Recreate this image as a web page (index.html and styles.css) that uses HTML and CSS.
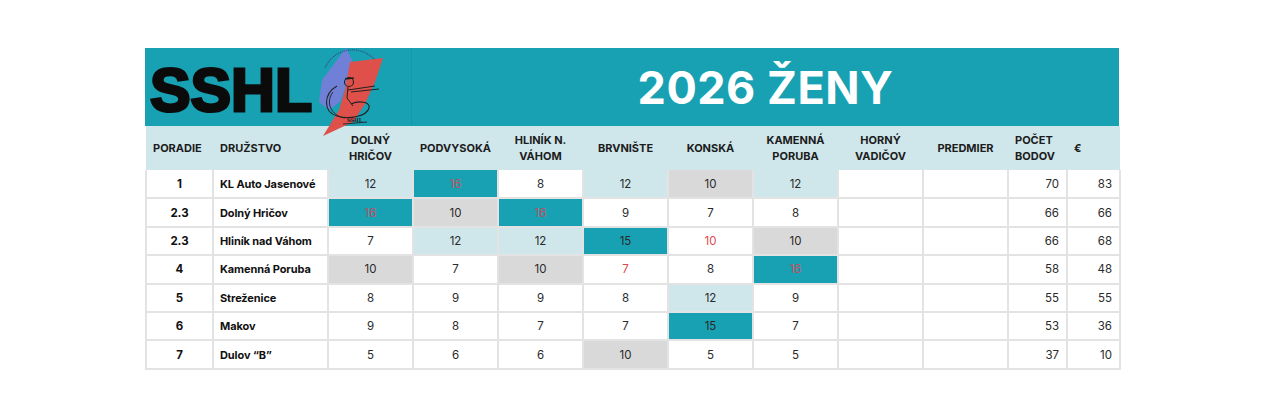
FILE: index.html
```html
<!DOCTYPE html>
<html lang="sk">
<head>
<meta charset="utf-8">
<title>SSHL 2026 Ženy</title>
<link rel="stylesheet" href="styles.css">
</head>
<body>
<div class="board">
  <div class="banner">
    <div class="brand">
      <span class="brand-text">SSHL</span>
      <svg class="emblem" viewBox="0 0 75 92" width="75" height="92" aria-hidden="true">
        <polygon points="31,2 37,14 32,38 25,56 14,64 4,56 7,34" fill="#7080d6"/>
        <polygon points="35,16 68,12 60,36 50,58 38,76 8,90 24,64 30,44" fill="#e0504b"/>
        <path d="M10,22 A30,30 0 0 1 60,14" fill="none" stroke="#3b3f8a" stroke-width="1.1" stroke-dasharray="1 1"/>
        <circle cx="34" cy="36" r="4.5" fill="none" stroke="#222" stroke-width="1.1"/>
        <path d="M30,33 L39,32" stroke="#222" stroke-width="1.3"/>
        <path d="M33,41 L32,52 L38,60 M33,44 L60,40 M36,46 L64,43" fill="none" stroke="#222" stroke-width="1"/>
        <path d="M22,40 C8,48 8,66 22,70 C34,74 52,70 54,62 C56,56 44,54 36,58" fill="none" stroke="#222" stroke-width="1.1"/>
        <path d="M18,46 C10,56 16,70 30,72" fill="none" stroke="#222" stroke-width="0.9"/>
        <path d="M28,78 L52,76" stroke="#222" stroke-width="0.9"/>
        <text x="32" y="76" class="emblem-text">SSHL</text>
      </svg>
    </div>
    <div class="title">2026 ŽENY</div>
  </div>
  <table class="standings">
    <colgroup>
      <col class="c-rank"><col class="c-team">
      <col class="c-club"><col class="c-club"><col class="c-club"><col class="c-club">
      <col class="c-club"><col class="c-club"><col class="c-club"><col class="c-club">
      <col class="c-pts"><col class="c-eur">
    </colgroup>
    <thead>
      <tr>
        <th class="left">PORADIE</th>
        <th class="left">DRUŽSTVO</th>
        <th>DOLNÝ<br>HRIČOV</th>
        <th>PODVYSOKÁ</th>
        <th>HLINÍK N.<br>VÁHOM</th>
        <th>BRVNIŠTE</th>
        <th>KONSKÁ</th>
        <th>KAMENNÁ<br>PORUBA</th>
        <th>HORNÝ<br>VADIČOV</th>
        <th>PREDMIER</th>
        <th class="left">POČET<br>BODOV</th>
        <th class="left">€</th>
      </tr>
    </thead>
    <tbody>
      <tr>
        <td class="rank">1</td><td class="team">KL Auto Jasenové</td>
        <td class="lb">12</td><td class="tl red">16</td><td>8</td><td class="lb">12</td><td class="gr">10</td><td class="lb">12</td><td></td><td></td>
        <td class="num">70</td><td class="num">83</td>
      </tr>
      <tr>
        <td class="rank">2.3</td><td class="team">Dolný Hričov</td>
        <td class="tl red">16</td><td class="gr">10</td><td class="tl red">16</td><td>9</td><td>7</td><td>8</td><td></td><td></td>
        <td class="num">66</td><td class="num">66</td>
      </tr>
      <tr>
        <td class="rank">2.3</td><td class="team">Hliník nad Váhom</td>
        <td>7</td><td class="lb">12</td><td class="lb">12</td><td class="tl">15</td><td class="red">10</td><td class="gr">10</td><td></td><td></td>
        <td class="num">66</td><td class="num">68</td>
      </tr>
      <tr>
        <td class="rank">4</td><td class="team">Kamenná Poruba</td>
        <td class="gr">10</td><td>7</td><td class="gr">10</td><td class="red">7</td><td>8</td><td class="tl red">16</td><td></td><td></td>
        <td class="num">58</td><td class="num">48</td>
      </tr>
      <tr>
        <td class="rank">5</td><td class="team">Streženice</td>
        <td>8</td><td>9</td><td>9</td><td>8</td><td class="lb">12</td><td>9</td><td></td><td></td>
        <td class="num">55</td><td class="num">55</td>
      </tr>
      <tr>
        <td class="rank">6</td><td class="team">Makov</td>
        <td>9</td><td>8</td><td>7</td><td>7</td><td class="tl">15</td><td>7</td><td></td><td></td>
        <td class="num">53</td><td class="num">36</td>
      </tr>
      <tr>
        <td class="rank">7</td><td class="team">Dulov “B”</td>
        <td>5</td><td>6</td><td>6</td><td class="gr">10</td><td>5</td><td>5</td><td></td><td></td>
        <td class="num">37</td><td class="num">10</td>
      </tr>
    </tbody>
  </table>
</div>
</body>
</html>
```

FILE: styles.css
```css
html, body {
  margin: 0;
  padding: 0;
  background: #ffffff;
}

body {
  font-family: Inter, "Open Sans", "Liberation Sans", sans-serif;
  color: #1f1f1f;
}

.board {
  width: 974px;
  margin: 48px 0 0 145px;
  position: relative;
}

.banner {
  display: grid;
  grid-template-columns: 267px 707px;
  height: 78px;
  background: #17a1b3;
}

.brand {
  position: relative;
  border-right: 1px solid #1598aa;
  display: flex;
  align-items: center;
}

.brand-text {
  font-family: "Liberation Sans", Arial, sans-serif;
  font-weight: 700;
  font-size: 62px;
  line-height: 1;
  color: #0b0b0b;
  letter-spacing: 0;
  margin-left: 5px;
  margin-top: 6px;
  -webkit-text-stroke: 3px #0b0b0b;
  transform: scaleX(0.98);
  transform-origin: left center;
}

.emblem {
  position: absolute;
  left: 170px;
  top: -2px;
  z-index: 2;
}

.emblem-text {
  font-family: "DejaVu Serif", serif;
  font-size: 5px;
  font-weight: 700;
  fill: #222;
}

.title {
  display: flex;
  align-items: center;
  justify-content: center;
  color: #ffffff;
  font-weight: 700;
  font-size: 45px;
  letter-spacing: 0.5px;
}

.standings {
  width: 974px;
  border-collapse: collapse;
  table-layout: fixed;
  font-size: 11.5px;
}

.c-rank { width: 67px; }
.c-team { width: 115px; }
.c-club { width: 85px; }
.c-pts { width: 59px; }
.c-eur { width: 53px; }

thead tr {
  background: #cfe7eb;
  height: 44px;
}

th {
  font-size: 11px;
  font-weight: 700;
  color: #1c1c1c;
  text-align: center;
  line-height: 16px;
  padding: 0 4px;
}

th.left {
  text-align: left;
  padding-left: 7px;
}

tbody tr {
  height: 28.4px;
}

td {
  border: 2px solid #e3e3e3;
  text-align: center;
  padding: 0 6px;
  color: #2a2a2a;
  background: #ffffff;
  white-space: nowrap;
}

tbody tr:first-child td {
  border-top: 0;
}

td.rank {
  font-weight: 700;
  color: #111;
}

td.team {
  text-align: left;
  font-weight: 700;
  font-size: 11px;
  letter-spacing: -0.1px;
  padding-left: 6px;
  padding-right: 0;
  color: #111;
}

td.num {
  text-align: right;
  padding-right: 7px;
}

td.lb { background: #cfe7eb; }
td.gr { background: #d9d9d9; }
td.tl { background: #17a1b3; }
td.red { color: #e0474c; }
td.tl.red { color: #c4505e; }
```
